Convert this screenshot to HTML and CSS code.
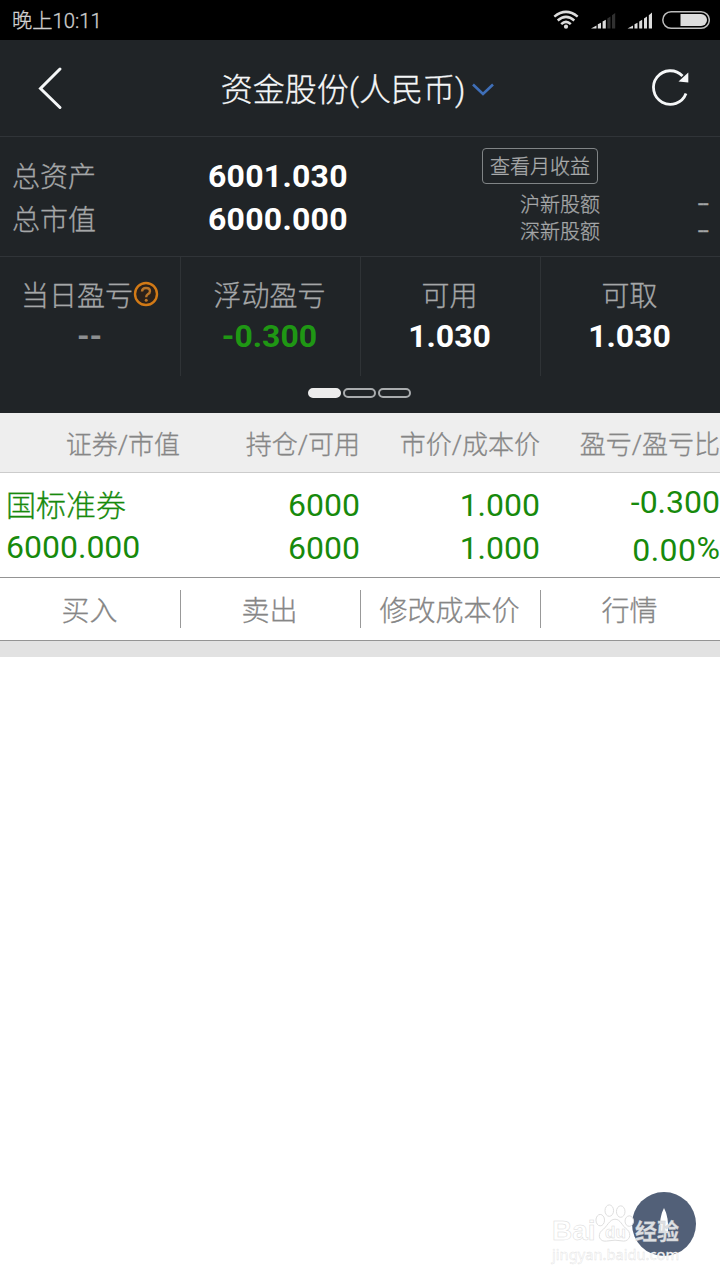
FILE: index.html
```html
<!DOCTYPE html>
<html lang="zh-CN">
<head>
<meta charset="utf-8">
<title>资金股份</title>
<link rel="stylesheet" href="styles.css">
</head>
<body>
<div class="screen">
  <div class="status">
    <span class="clock">晚上10:11</span>
    <svg class="status-icons" width="160" height="40" viewBox="550 0 160 40">
      <g fill="none" stroke="#dcdcdc" stroke-width="2.500">
        <path d="M554.3 16.6Q566 7.200 577.700 16.600"/>
        <path d="M557.700 20.500Q566 13.300 574.300 20.500"/>
        <path d="M561.200 24.200Q566 19.600 570.800 24.200"/>
      </g>
      <circle cx="566" cy="26.700" r="2.100" fill="#dcdcdc"/>
      <g fill="#dcdcdc">
        <path d="M591 28.500l5.500-3v3zM597.800 28.500v-4.200l3.200-1.600v5.800zM602.600 28.500v-7l3.200-1.800v8.800z"/>
        <path fill="#303030" d="M607.300 28.500v-10l3.200-2v12zM612 28.500v-13.200l3.200-2.400v15.600z"/>
        <path d="M627.500 28.500l5.500-3v3zM634.500 28.500v-4.200l3-1.600v5.800zM639.200 28.500v-7l3-1.800v8.800zM644 28.500v-10l3-2v12zM648.800 28.500v-13.200l3.200-2.900v16.100z"/>
      </g>
      <rect x="662.800" y="11.700" width="46.500" height="16.600" rx="8.300" fill="none" stroke="#bcbcbc" stroke-width="1.500"/>
      <path fill="#dcdcdc" d="M680.500 14h20.500a6 6 0 0 1 0 12h-20.500z"/>
    </svg>
  </div>

  <header class="titlebar">
    <svg class="back" width="30" height="44" viewBox="0 0 30 44"><path d="M23 3L3.500 22.500L23 41.500" fill="none" stroke="#f5f7f8" stroke-width="3" stroke-linecap="round"/></svg>
    <h1 class="title">资金股份(人民币)<svg class="caret" width="24" height="14" viewBox="0 0 24 14"><path d="M2 1.500L12 11L22 1.500" fill="none" stroke="#3f6fb8" stroke-width="2.600"/></svg></h1>
    <svg class="refresh" width="40" height="40" viewBox="0 0 40 40"><path d="M36 25.500A16.800 16.800 0 1 1 32.500 8" fill="none" stroke="#f5f7f8" stroke-width="2.800"/><path d="M38.300 4.500V14.500L28.500 13.500Z" fill="#f5f7f8"/></svg>
  </header>

  <section class="assets">
    <dl class="totals">
      <dt>总资产</dt><dd>6001.030</dd>
      <dt>总市值</dt><dd>6000.000</dd>
    </dl>
    <div class="quota">
      <button class="profit">查看月收益</button>
      <div class="quota-row"><span>沪新股额</span><span class="dash">--</span></div>
      <div class="quota-row"><span>深新股额</span><span class="dash">--</span></div>
    </div>
  </section>

  <section class="stats">
    <div class="stat">
      <div class="stat-name">当日盈亏<svg class="help" width="26" height="26" viewBox="0 0 26 26"><circle cx="13" cy="13" r="11" fill="#2b211a" stroke="#d27a16" stroke-width="2.400"/><path d="M9 10.500Q9.200 7 13 7Q17 7 17 10.200Q17 12 14.800 13.200Q13.200 14.200 13.200 16.300" fill="none" stroke="#b97528" stroke-width="2.400"/><circle cx="13.200" cy="19.200" r="1.500" fill="#b97528"/></svg></div>
      <div class="stat-value muted">--</div>
    </div>
    <div class="stat"><div class="stat-name">浮动盈亏</div><div class="stat-value loss">-0.300</div></div>
    <div class="stat"><div class="stat-name">可用</div><div class="stat-value">1.030</div></div>
    <div class="stat"><div class="stat-name">可取</div><div class="stat-value">1.030</div></div>
  </section>
  <div class="pager"><i class="dot active"></i><i class="dot"></i><i class="dot"></i></div>

  <div class="table-head">
    <span>证券/市值</span><span>持仓/可用</span><span>市价/成本价</span><span>盈亏/盈亏比</span>
  </div>
  <div class="holding">
    <div class="cell name"><span class="stock">国标准券</span><span>6000.000</span></div>
    <div class="cell"><span>6000</span><span>6000</span></div>
    <div class="cell"><span>1.000</span><span>1.000</span></div>
    <div class="cell gain"><span>-0.300</span><span class="ratio">0.00<span class="percent">%</span></span></div>
  </div>
  <nav class="actions">
    <span>买入</span><span>卖出</span><span>修改成本价</span><span>行情</span>
  </nav>
  <div class="spacer"></div>

  <div class="fab"><svg width="64" height="64" viewBox="0 0 64 64"><path d="M32 16Q37 25 36 41H28Q27 25 32 16Z" fill="#fff"/></svg></div>
  <div class="watermark">
    <div class="mark-logo">
      <span class="bai">Bai</span>
      <span class="paw"><svg width="40" height="42" viewBox="0 0 42 42"><g fill="#fff" stroke="#dcdcdc" stroke-width="1"><ellipse cx="5.500" cy="18" rx="4.500" ry="6"/><ellipse cx="15" cy="8" rx="4.500" ry="6"/><ellipse cx="27" cy="9" rx="4.500" ry="6"/><ellipse cx="36" cy="19" rx="4.500" ry="5.500"/><path d="M21 17C27 17 28 24 34 28C39 33 36 40 30 40Q21 38 12 40C5 41 2 34 7 29C13 25 15 17 21 17Z"/></g></svg><b>du</b></span>
      <span class="exp">经验</span>
    </div>
    <div class="mark-url">jingyan.baidu.com</div>
  </div>
</div>
</body>
</html>
```
FILE: styles.css
```css
* { box-sizing: border-box; margin: 0; padding: 0; }
body {
  background: #fff;
  font-family: Roboto, "Noto Sans CJK SC", sans-serif;
}
.screen {
  position: relative;
  width: 720px;
  height: 1280px;
  overflow: hidden;
  font-weight: 300;
}
.clock, .title, .totals dt, .quota, .profit, .stat-name, .table-head, .stock, .actions {
  -webkit-text-stroke: 0.300px currentColor;
}
.status {
  display: flex;
  justify-content: space-between;
  height: 40px;
  padding: 0 10px 0 12px;
  background: #000;
  color: #d0d0d0;
}
.clock { font-size: 20.300px; line-height: 43px; }

.titlebar {
  display: flex;
  align-items: center;
  justify-content: space-between;
  height: 97px;
  padding: 0 30px 0 37px;
  background: #202427;
  border-bottom: 1px solid #303438;
}
.title {
  display: flex;
  align-items: center;
  gap: 6px;
  padding-right: 1px;
  color: #f5f7f8;
  font-size: 32px;
  font-weight: 300;
  line-height: 96px;
  padding-top: 3px;
}
.caret { margin-top: 1px; }

.assets {
  display: flex;
  height: 120px;
  background: #202427;
  border-bottom: 1px solid #303438;
  color: #a5a7a8;
}
.totals {
  display: grid;
  grid-template-columns: 196px auto;
  grid-auto-rows: 43px;
  width: 482px;
  padding: 18px 0 0 12px;
  line-height: 43px;
}
.totals dt { font-size: 28px; line-height: 45px; }
.totals dd { color: #fff; font-size: 32px; font-weight: 700; letter-spacing: 0.250px; }
.quota { width: 238px; padding-top: 11px; font-size: 20px; }
.profit {
  display: block;
  width: 116px;
  height: 36px;
  margin-bottom: 7px;
  padding-top: 2px;
  background: none;
  border: 1px solid #808486;
  border-radius: 4px;
  color: #a9abac;
  font: 300 20px/32px Roboto, "Noto Sans CJK SC", sans-serif;
}
.quota-row {
  display: flex;
  justify-content: space-between;
  height: 27px;
  padding: 0 12px 0 38px;
  line-height: 29px;
}
.dash { font-weight: 400; letter-spacing: -0.500px; line-height: 25px; }

.stats {
  display: grid;
  grid-template-columns: repeat(4, 1fr);
  height: 119px;
  background: #202427;
  text-align: center;
}
.stat { padding: 20px 2px 0 0; border-left: 1px solid #2f3336; }
.stat:first-child { border-left-color: transparent; }
.stat-name {
  display: flex;
  justify-content: center;
  align-items: center;
  height: 40px;
  color: #a5a7a8;
  font-size: 28px;
  line-height: 40px;
}
.help { margin-top: -6px; margin-right: -1px; }
.stat-value { color: #fff; font-size: 32px; font-weight: 700; line-height: 38px; }
.stat-value.muted { color: #8d8f91; }
.stat-value.loss { color: #1f9714; }
.pager {
  display: flex;
  justify-content: center;
  gap: 2px;
  height: 37px;
  padding: 12px 2px 0 0;
  background: #202427;
}
.dot { width: 33px; height: 10px; border: 2px solid #a9acae; border-radius: 5px; }
.dot.active { background: #ececec; border-color: #ececec; }

.table-head {
  display: grid;
  grid-template-columns: repeat(4, 180px);
  height: 60px;
  background: #eee;
  border-bottom: 1px solid #ccc;
  color: #868686;
  font-size: 26px;
  line-height: 65px;
  text-align: right;
}
.holding {
  display: grid;
  grid-template-columns: repeat(4, 180px);
  height: 105px;
  padding-top: 10px;
  border-bottom: 1px solid #949494;
  color: #178a0c;
  font-size: 32px;
  font-weight: 400;
}
.cell { display: flex; flex-direction: column; text-align: right; line-height: 43px; padding-top: 1px; }
.name { padding: 0 0 0 6px; text-align: left; }
.stock { height: 43px; font-size: 30px; font-weight: 300; line-height: 45px; }
.gain { gap: 5px; padding-top: 0; margin-top: -2px; }
.ratio { height: 43px; letter-spacing: 0.500px; line-height: 42px; }
.percent { position: relative; top: -2px; letter-spacing: 0; }
.actions {
  display: grid;
  grid-template-columns: repeat(4, 180px);
  height: 63px;
  padding: 12px 0;
  border-bottom: 1px solid #949494;
  color: #868686;
  font-size: 28px;
  line-height: 44px;
  text-align: center;
}
.actions span { height: 38px; padding-right: 2px; border-left: 1px solid #999; }
.actions span:first-child { border-left-color: transparent; }
.spacer { height: 16px; background: #e2e2e2; }

.fab {
  position: absolute;
  left: 632px;
  top: 1192px;
  width: 64px;
  height: 64px;
  border-radius: 50%;
  background: #526078;
}
.watermark { position: absolute; left: 552px; top: 1201px; width: 140px; }
.mark-logo { display: flex; align-items: flex-end; height: 43px; }
.bai, .paw b {
  color: #fff;
  font: 700 28px/30px "Liberation Sans", sans-serif;
  -webkit-text-stroke: 0.500px #dadada;
}
.bai { width: 43px; height: 28px; }
.paw { position: relative; width: 40px; height: 42px; }
.paw b { position: absolute; left: 10px; top: 20px; font-size: 17px; line-height: 21px; }
.exp { height: 28px; color: #dcdfe3; font-size: 22px; font-weight: 700; line-height: 32px; -webkit-text-stroke: 0.300px #d0d0d0; }
.mark-url {
  color: #fff;
  font: 400 14.700px/20px "Noto Sans", sans-serif;
  -webkit-text-stroke: 0.400px #dfdfdf;
}
```
